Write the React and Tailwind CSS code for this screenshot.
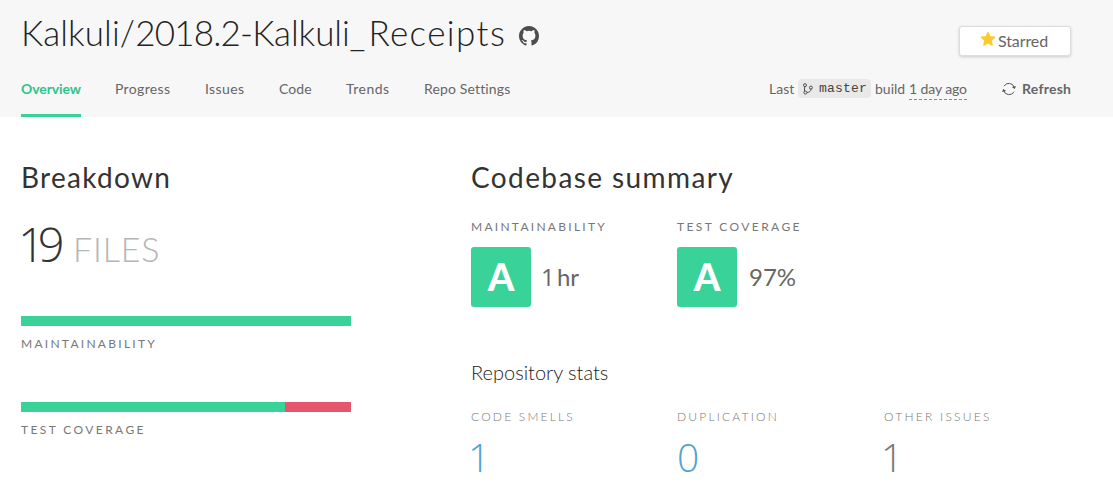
import React from 'react';

const tabs = [
  { name: 'Progress', width: 'w-[56px]', track: 'tracking-[0.35px]' },
  { name: 'Issues', width: 'w-[40px]', track: 'tracking-[0.4px]' },
  { name: 'Code', width: 'w-[33px]', track: 'tracking-[0.1px]' },
  { name: 'Trends', width: 'w-[44px]', track: 'tracking-[0.5px]' },
  { name: 'Repo Settings', width: 'w-[87px]', track: 'tracking-[0.15px]' },
];

function GithubIcon() {
  return (
    <svg viewBox="0 0 16 16" className="size-5 fill-[#4d4d4d]">
      <path d="M8 0C3.58 0 0 3.58 0 8c0 3.54 2.29 6.53 5.47 7.59.4.07.55-.17.55-.38 0-.19-.01-.82-.01-1.49-2.01.37-2.53-.49-2.69-.94-.09-.23-.48-.94-.82-1.13-.28-.15-.68-.52-.01-.53.63-.01 1.08.58 1.23.82.72 1.21 1.87.87 2.33.66.07-.52.28-.87.51-1.07-1.78-.2-3.64-.89-3.64-3.95 0-.87.31-1.59.82-2.15-.08-.2-.36-1.02.08-2.12 0 0 .67-.21 2.2.82a7.42 7.42 0 0 1 4 0c1.53-1.04 2.2-.82 2.2-.82.44 1.1.16 1.92.08 2.12.51.56.82 1.27.82 2.15 0 3.07-1.87 3.75-3.65 3.95.29.25.54.73.54 1.48 0 1.07-.01 1.93-.01 2.2 0 .21.15.46.55.38A8.01 8.01 0 0 0 16 8c0-4.42-3.58-8-8-8z" />
    </svg>
  );
}

function StarIcon() {
  return (
    <svg viewBox="0 0 16 16" className="size-4">
      <path
        d="M8 1.4l2 4.2 4.7.6-3.4 3.2.9 4.7L8 11.9l-4.2 2.2.9-4.7L1.3 6.2 6 5.6z"
        fill="#fccb32"
        stroke="#fccb32"
        strokeWidth="1.2"
        strokeLinejoin="round"
      />
    </svg>
  );
}

function BranchIcon() {
  return (
    <svg viewBox="0 0 12 12" className="h-3 w-3 fill-none stroke-[#4d4d4d]" strokeWidth="1">
      <circle cx="3" cy="2.200" r="1.500" />
      <circle cx="3.400" cy="9.600" r="1.500" />
      <circle cx="8.900" cy="4.600" r="1.500" />
      <path d="M2.700 3.700L2.400 8.300M9 6.100C9 8.400 7.200 9.300 4.900 9.500" />
    </svg>
  );
}

function RefreshIcon() {
  return (
    <svg viewBox="0 0 14 14" className="size-3.5 fill-none stroke-[#555]" strokeWidth="1">
      <path d="M2 4.200A5.600 5.600 0 0 1 12.300 5.500M12 9.800A5.600 5.600 0 0 1 1.700 8.500" />
      <path d="M9.800 4.900L14 3.900L12.700 7.100zM4.200 9.100L0 10.100L1.300 6.900z" className="fill-[#555] stroke-none" />
    </svg>
  );
}

function Label({ children, className = '' }) {
  return <div className={`h-4 text-[12px] leading-4 whitespace-nowrap text-[#777] ${className}`}>{children}</div>;
}

function Rating({ label, track, children }) {
  return (
    <div>
      <Label className={track}>{label}</Label>
      <div className="mt-3 flex h-[60px] items-center">
        <div className="flex h-[60px] w-[60px] justify-center rounded-[3px] bg-[#39d39a] text-[38px] leading-[58px] font-black text-white">
          A
        </div>
        <div className="ml-3 text-2xl leading-[60px] whitespace-nowrap text-[#666]">{children}</div>
      </div>
    </div>
  );
}

function Stat({ label, track, value, color }) {
  return (
    <div>
      <Label className={`font-light ${track}`}>{label}</Label>
      <div className={`mt-[7px] font-['Open_Sans',sans-serif] text-[39px] leading-[49px] font-light ${color}`}>{value}</div>
    </div>
  );
}

export default function App() {
  return (
    <div className="h-[501px] overflow-hidden bg-white font-['Lato',sans-serif] text-[#333] [font-variant-ligatures:none]">
      <header className="h-[117px] bg-[#f7f7f7] pr-[42px] pl-[21px]">
        <div className="flex items-start justify-between pt-2">
          <h1 className="flex h-12 items-center text-[35px] leading-[48px] font-light text-[#222]">
            <span className="w-[498px] whitespace-nowrap">
              <span className="tracking-[0.1px]">Kalkuli/</span>
              <span className="tracking-[-0.8px]">2018.2-</span>
              <span className="tracking-[-0.1px]">Kalkuli</span>
              <span className="tracking-[3px]">_</span>
              <span className="tracking-[1.4px]">Receipts</span>
            </span>
            <span className="mt-2">
              <GithubIcon />
            </span>
          </h1>
          <button className="mt-[18px] flex h-[30px] w-[112px] items-center rounded-[3px] border border-[#ddd] bg-white pl-5 text-base text-[#666] shadow-[0_1px_3px_rgba(0,0,0,0.18)]">
            <span className="mb-1">
              <StarIcon />
            </span>
            <span className="ml-[2px] tracking-[-0.1px]">Starred</span>
          </button>
        </div>
        <div className="mt-[23px] flex justify-between text-sm leading-5 text-[#666]">
          <nav className="flex gap-[34px] whitespace-nowrap">
            <a className="h-[38px] w-[60px] border-b-[3px] border-[#39d39a] font-bold tracking-[-0.1px] text-[#2cc58b]">Overview</a>
            {tabs.map((t) => (
              <a key={t.name} className={`${t.width} ${t.track}`}>
                {t.name}
              </a>
            ))}
          </nav>
          <div className="flex h-[21px] items-start whitespace-nowrap">
            <span className="w-[29px]">Last</span>
            <span className="flex h-[19px] w-[73px] items-center rounded-[4px] bg-[#e9e9e9] pl-1">
              <BranchIcon />
              <code className="ml-[5px] font-['Liberation_Mono',monospace] text-[13px] leading-[19px] tracking-[0.2px] text-[#444]">
                master
              </code>
            </span>
            <span className="ml-1 w-[34px]">build</span>
            <span className="h-[21px] w-[58px] border-b border-dashed border-[#888] tracking-[-0.1px]">1 day ago</span>
            <span className="mt-[3px] ml-[35px]">
              <RefreshIcon />
            </span>
            <span className="ml-[6px] w-[49px] font-bold tracking-[0.25px]">Refresh</span>
          </div>
        </div>
      </header>

      <main className="flex pt-[42px] pl-[21px]">
        <section className="w-[450px]">
          <h2 className="h-9 text-[28px] leading-9 tracking-[1.3px]">Breakdown</h2>
          <div className="mt-[21px] flex h-14 items-baseline leading-[56px] font-light">
            <span className="-ml-[3px] w-[55px] font-['Open_Sans',sans-serif] text-[47px]">
              <span className="tracking-[-7px]">1</span>9
            </span>
            <span className="text-[34px] tracking-[0.8px] text-[#b5b5b5]">FILES</span>
          </div>
          <div className="mt-[44px] h-[10px] w-[330px] bg-[#39d39a]" />
          <Label className="mt-[10px] tracking-[2.27px]">MAINTAINABILITY</Label>
          <div className="mt-[50px] flex h-[10px] w-[330px] bg-[#e5566c]">
            <div className="w-4/5 bg-[#39d39a]" />
          </div>
          <Label className="mt-[10px] tracking-[2.4px]">TEST COVERAGE</Label>
        </section>

        <section className="w-[620px]">
          <h2 className="h-9 text-[28px] leading-9 tracking-[1.4px]">Codebase summary</h2>
          <div className="mt-6 grid grid-cols-[206px_207px_207px]">
            <Rating label="MAINTAINABILITY" track="tracking-[2.27px]">
              <span className="-ml-[2px] font-['Open_Sans',sans-serif] tracking-[-4px]">1</span> hr
            </Rating>
            <Rating label="TEST COVERAGE" track="tracking-[2.4px]">
              97%
            </Rating>
          </div>
          <h3 className="mt-[50px] h-[30px] text-xl leading-[30px] font-light text-[#222]">Repository stats</h3>
          <div className="mt-[22px] grid grid-cols-[206px_207px_207px]">
            <Stat label="CODE SMELLS" track="tracking-[2.2px]" value={<span className="-ml-[3px]">1</span>} color="text-[#4ea3d0]" />
            <Stat label="DUPLICATION" track="tracking-[2.2px]" value="0" color="text-[#4ea3d0]" />
            <Stat label="OTHER ISSUES" track="tracking-[2.25px]" value={<span className="-ml-[3px]">1</span>} color="text-[#777]" />
          </div>
        </section>
      </main>
    </div>
  );
}
